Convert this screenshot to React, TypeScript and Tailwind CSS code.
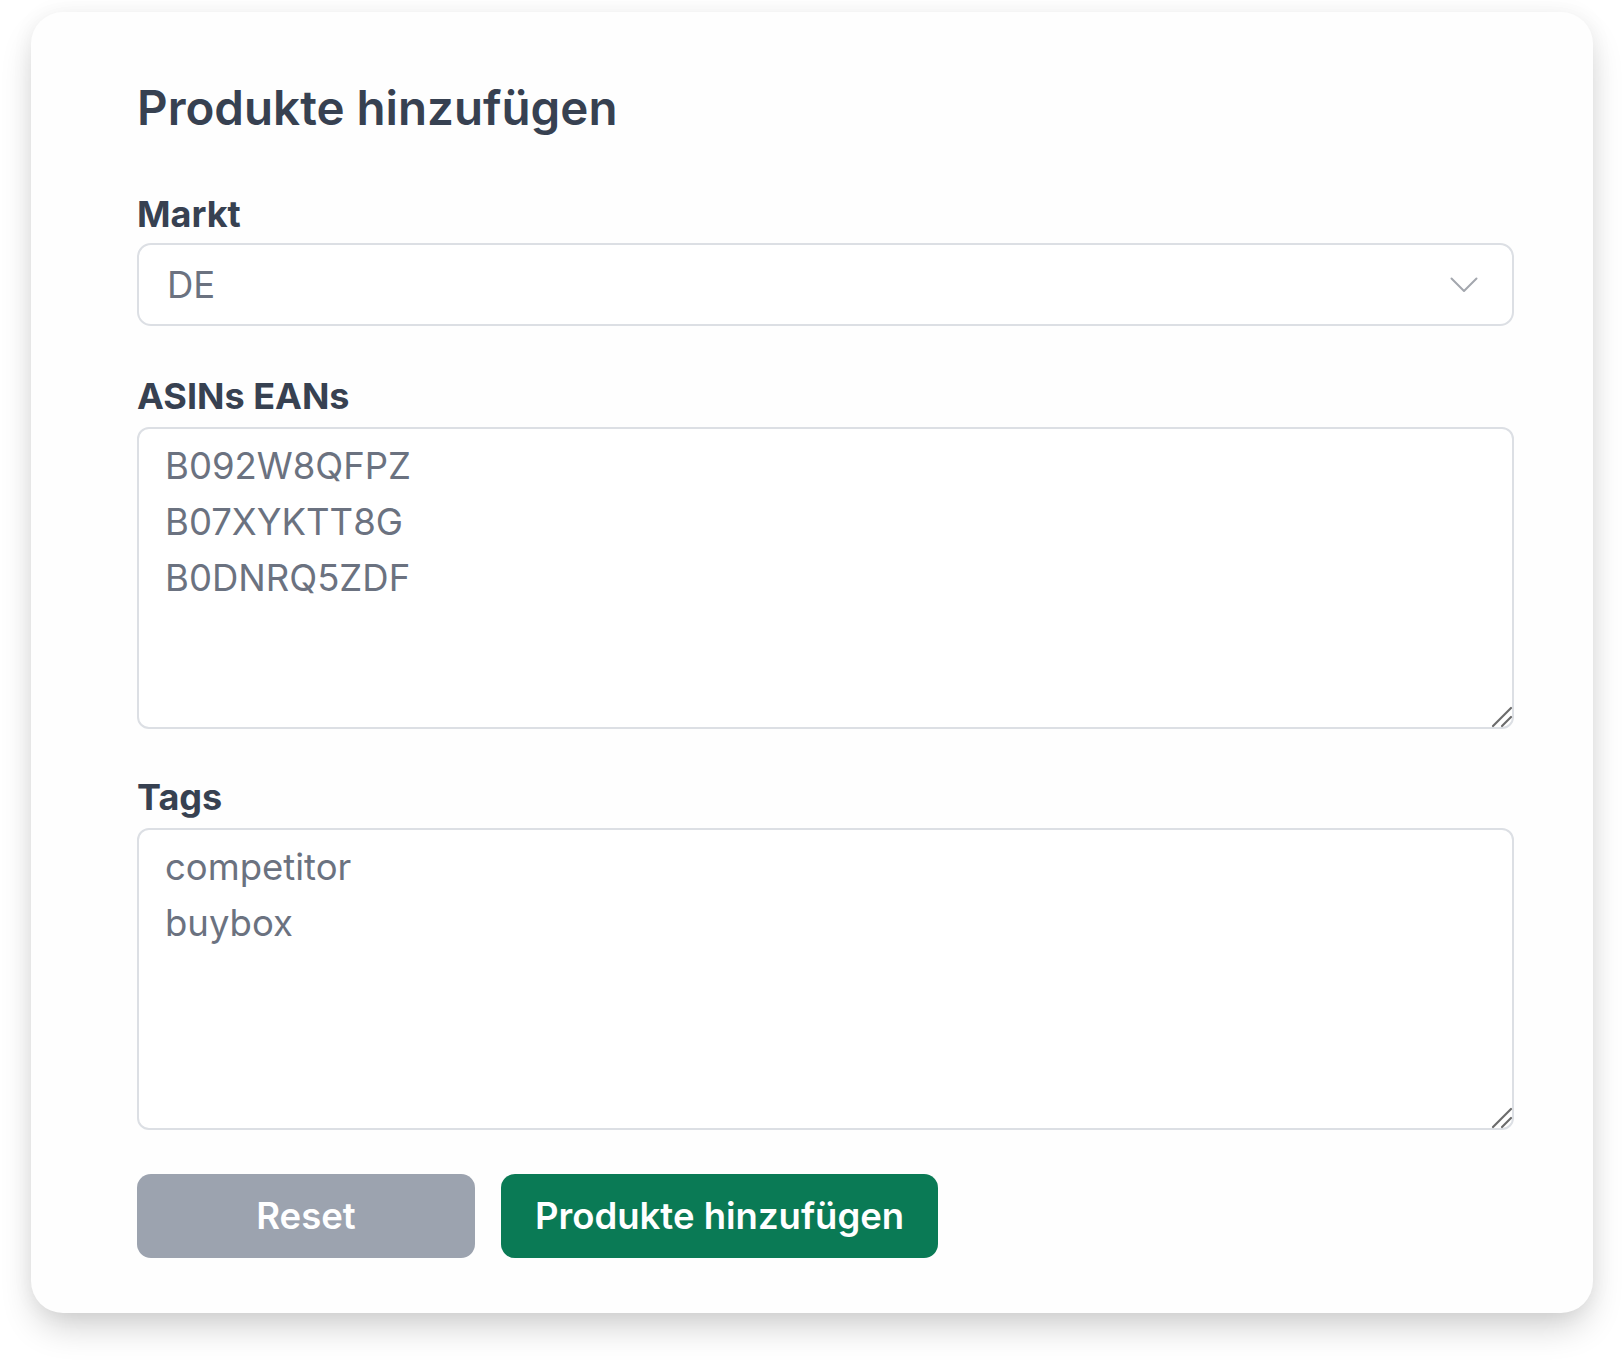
import React from "react";

function Chevron() {
  return (
    <svg width="28" height="16" viewBox="0 0 28 16" fill="none" className="shrink-0">
      <path d="M1.5 1.5 L14 14 L26.5 1.5" stroke="#a3a7ae" strokeWidth="2" strokeLinecap="round" strokeLinejoin="round" />
    </svg>
  );
}

// resize grip, drawn so it matches the larger macOS one
function Grip() {
  return (
    <svg width="24" height="24" viewBox="0 0 24 24" fill="none" className="pointer-events-none absolute bottom-[1px] right-[1px]">
      <path d="M4 22 L22 4" stroke="#6b6b6b" strokeWidth="2.2" strokeLinecap="round" />
      <path d="M13 22 L22 13" stroke="#6b6b6b" strokeWidth="2.2" strokeLinecap="round" />
    </svg>
  );
}

function Label({ children }: { children: React.ReactNode }) {
  return (
    <label className="block text-[36px] font-bold leading-[56px] text-[#374151]">
      {children}
    </label>
  );
}

function Field({ label, value }: { label: string; value: string }) {
  return (
    <div className="flex flex-col gap-[3px]">
      <Label>{label}</Label>
      <div className="relative">
        <textarea
          defaultValue={value}
          spellCheck={false}
          className="block h-[302px] w-full resize-none rounded-[12px] border-2 border-[#dcdfe4] bg-white px-[26px] py-[9px] text-[36.5px] leading-[56px] text-[#6b7280] outline-none"
        />
        <Grip />
      </div>
    </div>
  );
}

export default function App() {
  return (
    <div className="min-h-[1364px] bg-white px-[31px] pt-[12px] font-['Inter',sans-serif]">
      <div className="rounded-[32px] bg-[#fefefe] pl-[106px] pr-[79px] pt-[64px] pb-[55px] shadow-[0_18px_36px_-6px_rgba(0,0,0,0.2),0_0_22px_rgba(0,0,0,0.05)]">
        <h1 className="text-[47.5px] font-semibold leading-[64px] text-[#374151]">
          Produkte hinzufügen
        </h1>

        <div className="mt-[46px] flex flex-col gap-[1px]">
          <Label>Markt</Label>
          <div className="flex h-[83px] items-center justify-between rounded-[14px] border-2 border-[#dcdfe4] bg-white pl-[28px] pr-[34px]">
            <span className="text-[36.5px] leading-[56px] text-[#6b7280]">DE</span>
            <Chevron />
          </div>
        </div>

        <div className="mt-[42px]">
          <Field label="ASINs EANs" value={"B092W8QFPZ\nB07XYKTT8G\nB0DNRQ5ZDF"} />
        </div>

        <div className="mt-[40px]">
          <Field label="Tags" value={"competitor\nbuybox"} />
        </div>

        <div className="mt-[44px] flex gap-[26px]">
          <button className="h-[84px] w-[338px] rounded-[14px] bg-[#9ca3af] text-[36.5px] font-semibold text-white">
            Reset
          </button>
          <button className="h-[84px] rounded-[14px] bg-[#0a7a55] px-[34px] text-[36.5px] font-semibold text-white">
            Produkte hinzufügen
          </button>
        </div>
      </div>
    </div>
  );
}
